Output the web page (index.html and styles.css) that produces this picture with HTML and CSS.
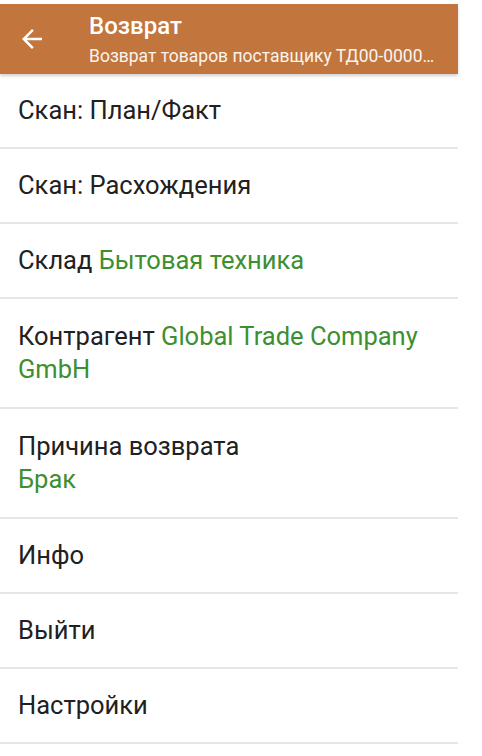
FILE: index.html
```html
<!DOCTYPE HTML>
<html>
<head>
<meta charset="utf-8">
<title>Возврат</title>
<link rel="stylesheet" href="styles.css">
</head>
<body>
<div class="screen">
  <div class="toolbar">
    <div class="backButton">
      <svg width="30" height="30" viewBox="0 0 24 24">
        <path d="M20 11H7.83l5.59-5.59L12 4l-8 8 8 8 1.41-1.41L7.83 13H20v-2z" fill="#ffffff"/>
      </svg>
    </div>
    <div class="titles">
      <div class="title">Возврат</div>
      <div class="subtitle">Возврат товаров поставщику ТД00-0000…</div>
    </div>
  </div>

  <div class="menu">
    <div class="item"><div class="label">Скан: План/Факт</div></div>
    <div class="item"><div class="label">Скан: Расхождения</div></div>
    <div class="item"><div class="label">Склад <span class="value">Бытовая техника</span></div></div>
    <div class="item tall"><div class="label">Контрагент <span class="value">Global Trade Company</span><br><span class="value">GmbH</span></div></div>
    <div class="item tall"><div class="label">Причина возврата<br><span class="value">Брак</span></div></div>
    <div class="item"><div class="label">Инфо</div></div>
    <div class="item"><div class="label">Выйти</div></div>
    <div class="item"><div class="label">Настройки</div></div>
  </div>
</div>
</body>
</html>
```

FILE: styles.css
```css
body {
  margin: 0;
  background: #ffffff;
  font-family: Roboto, "Noto Sans", sans-serif;
}

.screen {
  width: 458px;
  padding-top: 4px;
}

.toolbar {
  display: flex;
  align-items: center;
  height: 70px;
  background: #c2763d;
  color: #ffffff;
  box-shadow: 0 2px 3px rgba(0, 0, 0, 0.18);
  position: relative;
}

.backButton {
  width: 89px;
  display: flex;
  padding-left: 17px;
  box-sizing: border-box;
}

.titles {
  flex: 1;
  min-width: 0;
}

.title {
  font-size: 24px;
  font-weight: 500;
  line-height: 28px;
}

.subtitle {
  font-size: 17.5px;
  line-height: 22px;
  margin-top: 5px;
  white-space: nowrap;
  opacity: 0.92;
}

.item {
  display: flex;
  align-items: center;
  height: 73px;
  padding: 0 30px 0 18px;
  border-bottom: 2px solid #e6e6e6;
  font-size: 25.5px;
  line-height: 33.5px;
  color: #212121;
}

.item.tall {
  height: 108px;
}

.value {
  color: #3d8f2f;
}
```
